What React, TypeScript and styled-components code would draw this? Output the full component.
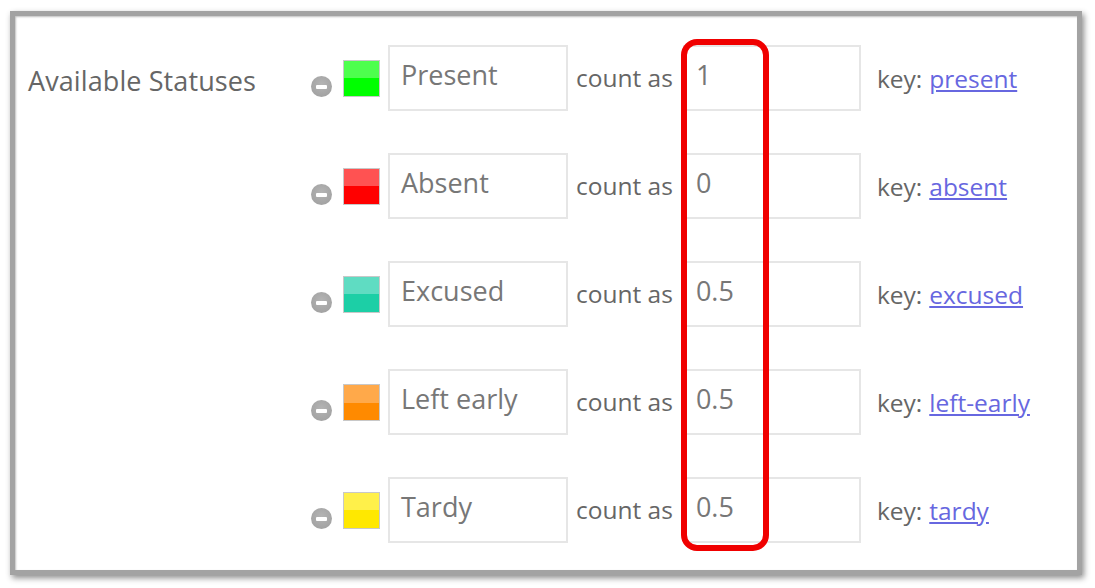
import React from 'react';
import styled, { createGlobalStyle } from 'styled-components';

type Status = {
  name: string;
  count: string;
  statusKey: string;
  top: string;
  bottom: string;
};

const STATUSES: Status[] = [
  { name: 'Present', count: '1', statusKey: 'present', top: '#4dff4d', bottom: '#00ff00' },
  { name: 'Absent', count: '0', statusKey: 'absent', top: '#ff5252', bottom: '#ff0000' },
  { name: 'Excused', count: '0.5', statusKey: 'excused', top: '#5fdcc2', bottom: '#1ccfa6' },
  { name: 'Left early', count: '0.5', statusKey: 'left-early', top: '#ffa94a', bottom: '#ff8a00' },
  { name: 'Tardy', count: '0.5', statusKey: 'tardy', top: '#fff04a', bottom: '#ffe800' },
];

const GlobalStyle = createGlobalStyle`
  body {
    margin: 0;
    background: #ffffff;
    font-family: "Open Sans", "Noto Sans", sans-serif;
  }
`;

const Page = styled.div`
  width: 1095px;
  height: 588px;
  padding: 11px 13px 13px 10px;
  box-sizing: border-box;
`;

const Card = styled.div`
  box-sizing: border-box;
  height: 564px;
  width: 1072px;
  border: 5px solid #a3a3a3;
  box-shadow: 2px 3px 6px rgba(0, 0, 0, 0.45), inset 1px 1px 2px rgba(0, 0, 0, 0.25);
  background: #fff;
  display: grid;
  grid-template-columns: 296px 1fr;
  padding-top: 29px;
`;

const Label = styled.div`
  padding-left: 13px;
  padding-top: 17px;
  font-size: 27px;
  letter-spacing: 0.1px;
  color: #666;
`;

const Rows = styled.div`
  position: relative;
  display: flex;
  flex-direction: column;
  gap: 42px;
`;

const Row = styled.div`
  display: flex;
  align-items: center;
  height: 66px;
`;

const Remove = styled.span`
  width: 21px;
  height: 21px;
  border-radius: 50%;
  background: radial-gradient(circle at 50% 40%, #b4b4b4, #9d9d9d);
  display: flex;
  align-items: center;
  justify-content: center;
  margin-top: 17px;
  margin-right: 11px;

  &::after {
    content: '';
    width: 11px;
    height: 4px;
    border-radius: 1px;
    background: #fff;
  }
`;

const Swatch = styled.span<{ $top: string; $bottom: string }>`
  width: 37px;
  height: 37px;
  box-sizing: border-box;
  border: 1px solid #c8c8c8;
  background: linear-gradient(${({ $top }) => $top} 50%, ${({ $bottom }) => $bottom} 50%);
  margin-right: 8px;
`;

const Field = styled.div<{ $width: number }>`
  box-sizing: border-box;
  width: ${({ $width }) => `${$width}px`};
  height: 66px;
  border: 2px solid #e6e6e6;
  padding: 10px 0 0 11px;
  font-size: 27px;
  line-height: 36px;
  color: #777;
`;

const CountAs = styled.span`
  font-size: 24.5px;
  color: #666;
  margin: 0 10px 0 8px;
  padding-bottom: 2px;
`;

const KeyLabel = styled.span`
  font-size: 24.5px;
  color: #666;
  margin-left: 16px;
`;

const KeyLink = styled.a`
  color: #6767e0;
  text-decoration: underline;
  margin-left: 7px;
`;

const Highlight = styled.div`
  position: absolute;
  left: 370px;
  top: -6px;
  width: 88px;
  height: 512px;
  box-sizing: border-box;
  border: 6px solid #f00000;
  border-radius: 16px;
  pointer-events: none;
`;

export default function App() {
  return (
    <>
      <GlobalStyle />
      <Page>
        <Card>
          <Label>Available Statuses</Label>
          <Rows>
            {STATUSES.map((s) => (
              <Row key={s.statusKey}>
                <Remove />
                <Swatch $top={s.top} $bottom={s.bottom} />
                <Field $width={180}>{s.name}</Field>
                <CountAs>count as</CountAs>
                <Field $width={178}>{s.count}</Field>
                <KeyLabel>
                  key:
                  <KeyLink href="#">{s.statusKey}</KeyLink>
                </KeyLabel>
              </Row>
            ))}
            <Highlight />
          </Rows>
        </Card>
      </Page>
    </>
  );
}
